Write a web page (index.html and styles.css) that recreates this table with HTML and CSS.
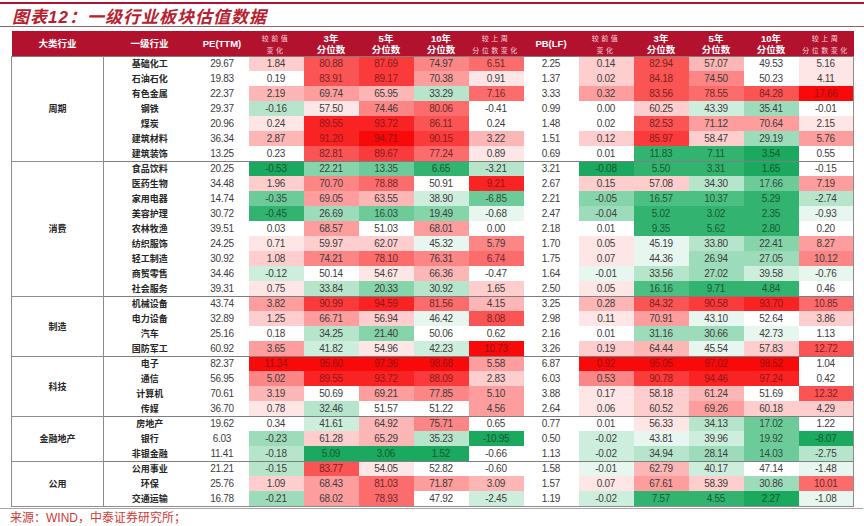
FILE: index.html
```html
<!DOCTYPE html>
<html lang="zh-CN">
<head>
<meta charset="utf-8">
<title>一级行业板块估值数据</title>
<link rel="stylesheet" href="styles.css">
</head>
<body>
<div class="page">
  <div class="topline"></div>
  <h1 class="title">图表12：一级行业板块估值数据</h1>
  <div class="rule"></div>
  <table class="val">
    <colgroup>
      <col class="c-cat"><col class="c-name"><col class="c-pe">
      <col class="c-n"><col class="c-n"><col class="c-n"><col class="c-n"><col class="c-n">
      <col class="c-n"><col class="c-n"><col class="c-n"><col class="c-n"><col class="c-n"><col class="c-n">
    </colgroup>
    <thead>
      <tr>
        <th>大类行业</th>
        <th>一级行业</th>
        <th>PE(TTM)</th>
        <th class="sm">较前值<br>变化</th>
        <th>3年<br>分位数</th>
        <th>5年<br>分位数</th>
        <th>10年<br>分位数</th>
        <th class="sm">较上周<br>分位数变化</th>
        <th>PB(LF)</th>
        <th class="sm">较前值<br>变化</th>
        <th>3年<br>分位数</th>
        <th>5年<br>分位数</th>
        <th>10年<br>分位数</th>
        <th class="sm">较上周<br>分位数变化</th>
      </tr>
    </thead>
    <tbody>
      <tr class="grp"><td class="cat" rowspan="7">周期</td><td class="name">基础化工</td><td>29.67</td><td class="r2">1.84</td><td class="r7">80.88</td><td class="r8">87.69</td><td class="r5">74.97</td><td class="r6">6.51</td><td>2.25</td><td class="r2">0.14</td><td class="r7">82.94</td><td class="r3">57.07</td><td>49.53</td><td class="r1">5.16</td></tr>
      <tr><td class="name">石油石化</td><td>19.83</td><td>0.19</td><td class="r7">83.91</td><td class="r8">89.17</td><td class="r4">70.38</td><td class="r1">0.91</td><td>1.37</td><td class="r2">0.02</td><td class="r7">84.18</td><td class="r5">74.50</td><td>50.23</td><td class="r1">4.11</td></tr>
      <tr><td class="name">有色金属</td><td>22.37</td><td class="r3">2.19</td><td class="r4">69.74</td><td class="r3">65.95</td><td class="g3">33.29</td><td class="r6">7.16</td><td>3.33</td><td class="r4">0.32</td><td class="r7">83.56</td><td class="r6">78.55</td><td class="r7">84.28</td><td class="r10">17.66</td></tr>
      <tr><td class="name">钢铁</td><td>29.37</td><td class="g3">-0.16</td><td class="r1">57.50</td><td class="r5">74.46</td><td class="r6">80.06</td><td>-0.41</td><td>0.99</td><td>0.00</td><td class="r2">60.25</td><td class="g2">43.39</td><td class="g4">35.41</td><td>-0.01</td></tr>
      <tr><td class="name">煤炭</td><td>20.96</td><td class="r1">0.24</td><td class="r9">89.55</td><td class="r9">93.72</td><td class="r7">86.11</td><td>0.24</td><td>1.48</td><td>0.02</td><td class="r7">82.53</td><td class="r4">71.12</td><td class="r4">70.64</td><td class="r1">2.15</td></tr>
      <tr><td class="name">建筑材料</td><td>36.34</td><td class="r3">2.87</td><td class="r9">91.20</td><td class="r10">94.71</td><td class="r8">90.15</td><td class="r3">3.22</td><td>1.51</td><td class="r2">0.12</td><td class="r8">85.97</td><td class="r2">58.47</td><td class="g4">29.19</td><td class="r4">5.76</td></tr>
      <tr><td class="name">建筑装饰</td><td>13.25</td><td>0.23</td><td class="r7">82.81</td><td class="r8">89.67</td><td class="r6">77.24</td><td class="r1">0.89</td><td>0.69</td><td>0.01</td><td class="g8">11.83</td><td class="g8">7.11</td><td class="g9">3.54</td><td>0.55</td></tr>

      <tr class="grp"><td class="cat" rowspan="9">消费</td><td class="name">食品饮料</td><td>20.25</td><td class="g9">-0.53</td><td class="g5">22.21</td><td class="g6">13.35</td><td class="g8">6.65</td><td class="g3">-3.21</td><td>3.21</td><td class="g9">-0.08</td><td class="g8">5.50</td><td class="g8">3.31</td><td class="g9">1.65</td><td>-0.15</td></tr>
      <tr><td class="name">医药生物</td><td>34.48</td><td class="r2">1.96</td><td class="r5">70.70</td><td class="r6">78.88</td><td>50.91</td><td class="r9">9.21</td><td>2.67</td><td class="r2">0.15</td><td class="r2">57.08</td><td class="g3">34.30</td><td class="g6">17.66</td><td class="r4">7.19</td></tr>
      <tr><td class="name">家用电器</td><td>14.74</td><td class="g6">-0.35</td><td class="r4">69.05</td><td class="r3">63.55</td><td class="g2">38.90</td><td class="g6">-6.85</td><td>2.21</td><td class="g5">-0.05</td><td class="g7">16.57</td><td class="g7">10.37</td><td class="g8">5.29</td><td class="g3">-2.74</td></tr>
      <tr><td class="name">美容护理</td><td>30.72</td><td class="g8">-0.45</td><td class="g4">26.69</td><td class="g6">16.03</td><td class="g5">19.49</td><td class="g1">-0.68</td><td>2.47</td><td class="g4">-0.04</td><td class="g8">5.02</td><td class="g8">3.02</td><td class="g8">2.35</td><td class="g1">-0.93</td></tr>
      <tr><td class="name">农林牧渔</td><td>39.51</td><td>0.03</td><td class="r4">68.57</td><td>51.03</td><td class="r4">68.01</td><td>0.00</td><td>2.18</td><td>0.01</td><td class="g8">9.35</td><td class="g8">5.62</td><td class="g8">2.80</td><td>0.20</td></tr>
      <tr><td class="name">纺织服饰</td><td>24.25</td><td class="r1">0.71</td><td class="r2">59.97</td><td class="r2">62.07</td><td class="g1">45.32</td><td class="r5">5.79</td><td>1.70</td><td class="r1">0.05</td><td class="g1">45.19</td><td class="g3">33.80</td><td class="g5">22.41</td><td class="r4">8.27</td></tr>
      <tr><td class="name">轻工制造</td><td>30.92</td><td class="r2">1.08</td><td class="r5">74.21</td><td class="r6">78.10</td><td class="r5">76.31</td><td class="r6">6.74</td><td>1.75</td><td class="r1">0.07</td><td class="g1">44.36</td><td class="g4">26.94</td><td class="g4">27.05</td><td class="r5">10.12</td></tr>
      <tr><td class="name">商贸零售</td><td>34.46</td><td class="g2">-0.12</td><td>50.14</td><td class="r1">54.67</td><td class="r3">66.36</td><td>-0.47</td><td>1.64</td><td class="g1">-0.01</td><td class="g3">33.56</td><td class="g4">27.02</td><td class="g2">39.58</td><td class="g1">-0.76</td></tr>
      <tr><td class="name">社会服务</td><td>39.31</td><td class="r1">0.75</td><td class="g3">33.84</td><td class="g5">20.33</td><td class="g3">30.92</td><td class="r2">1.65</td><td>2.50</td><td class="r1">0.05</td><td class="g7">16.16</td><td class="g8">9.71</td><td class="g8">4.84</td><td>0.46</td></tr>

      <tr class="grp"><td class="cat" rowspan="4">制造</td><td class="name">机械设备</td><td>43.74</td><td class="r4">3.82</td><td class="r8">90.99</td><td class="r9">94.59</td><td class="r6">81.56</td><td class="r3">4.15</td><td>3.25</td><td class="r3">0.28</td><td class="r7">84.32</td><td class="r8">90.58</td><td class="r9">93.70</td><td class="r6">10.85</td></tr>
      <tr><td class="name">电力设备</td><td>32.89</td><td class="r2">1.25</td><td class="r4">66.71</td><td class="r2">56.94</td><td class="g1">46.42</td><td class="r7">8.08</td><td>2.98</td><td class="r1">0.11</td><td class="r4">70.91</td><td class="g1">43.10</td><td>52.64</td><td class="r2">3.86</td></tr>
      <tr><td class="name">汽车</td><td>25.16</td><td>0.18</td><td class="g3">34.25</td><td class="g5">21.40</td><td>50.06</td><td>0.62</td><td>2.16</td><td>0.01</td><td class="g4">31.16</td><td class="g4">30.66</td><td class="g1">42.73</td><td>1.13</td></tr>
      <tr><td class="name">国防军工</td><td>60.92</td><td class="r4">3.65</td><td class="g2">41.82</td><td class="r1">54.96</td><td class="g2">42.23</td><td class="r10">10.73</td><td>3.26</td><td class="r2">0.19</td><td class="r3">64.44</td><td class="g1">45.54</td><td class="r2">57.83</td><td class="r7">12.72</td></tr>

      <tr class="grp"><td class="cat" rowspan="4">科技</td><td class="name">电子</td><td>82.37</td><td class="r10">11.34</td><td class="r10">95.60</td><td class="r10">97.36</td><td class="r10">98.68</td><td class="r4">5.58</td><td>6.87</td><td class="r10">0.92</td><td class="r10">95.05</td><td class="r10">97.02</td><td class="r10">98.52</td><td>1.04</td></tr>
      <tr><td class="name">通信</td><td>56.95</td><td class="r5">5.02</td><td class="r9">89.55</td><td class="r9">93.72</td><td class="r8">88.09</td><td class="r2">2.83</td><td>6.03</td><td class="r5">0.53</td><td class="r8">90.78</td><td class="r9">94.46</td><td class="r9">97.24</td><td>0.42</td></tr>
      <tr><td class="name">计算机</td><td>70.61</td><td class="r3">3.19</td><td>50.69</td><td class="r4">69.21</td><td class="r5">77.85</td><td class="r4">5.10</td><td>3.88</td><td class="r1">0.17</td><td class="r2">58.18</td><td class="r3">61.24</td><td>51.69</td><td class="r7">12.32</td></tr>
      <tr><td class="name">传媒</td><td>36.70</td><td class="r1">0.78</td><td class="g3">32.46</td><td>51.57</td><td>51.22</td><td class="r4">4.56</td><td>2.64</td><td class="r1">0.06</td><td class="r2">60.52</td><td class="r4">69.26</td><td class="r2">60.18</td><td class="r2">4.29</td></tr>

      <tr class="grp"><td class="cat" rowspan="3">金融地产</td><td class="name">房地产</td><td>19.62</td><td>0.34</td><td class="g2">41.61</td><td class="r3">64.92</td><td class="r5">75.71</td><td>0.65</td><td>0.77</td><td>0.01</td><td class="r1">56.33</td><td class="g3">34.13</td><td class="g6">17.02</td><td>1.22</td></tr>
      <tr><td class="name">银行</td><td>6.03</td><td class="g4">-0.23</td><td class="r2">61.28</td><td class="r3">65.29</td><td class="g3">35.23</td><td class="g9">-10.95</td><td>0.50</td><td class="g2">-0.02</td><td class="g1">43.81</td><td class="g2">39.96</td><td class="g6">19.92</td><td class="g9">-8.07</td></tr>
      <tr><td class="name">非银金融</td><td>11.41</td><td class="g3">-0.18</td><td class="g9">5.09</td><td class="g9">3.06</td><td class="g9">1.52</td><td>-0.66</td><td>1.13</td><td class="g2">-0.02</td><td class="g3">34.94</td><td class="g4">28.14</td><td class="g6">14.03</td><td class="g3">-2.75</td></tr>

      <tr class="grp"><td class="cat" rowspan="3">公用</td><td class="name">公用事业</td><td>21.21</td><td class="g3">-0.15</td><td class="r7">83.77</td><td class="r1">54.05</td><td>52.82</td><td>-0.60</td><td>1.58</td><td class="g1">-0.01</td><td class="r3">62.79</td><td class="g2">40.17</td><td>47.14</td><td class="g1">-1.48</td></tr>
      <tr><td class="name">环保</td><td>25.76</td><td class="r2">1.09</td><td class="r4">68.43</td><td class="r6">81.03</td><td class="r4">71.87</td><td class="r3">3.09</td><td>1.57</td><td class="r1">0.07</td><td class="r4">67.61</td><td class="r2">58.39</td><td class="g4">30.86</td><td class="r6">10.01</td></tr>
      <tr class="last"><td class="name">交通运输</td><td>16.78</td><td class="g4">-0.21</td><td class="r4">68.02</td><td class="r6">78.93</td><td>47.92</td><td class="g2">-2.45</td><td>1.19</td><td class="g2">-0.02</td><td class="g8">7.57</td><td class="g8">4.55</td><td class="g9">2.27</td><td class="g1">-1.08</td></tr>
    </tbody>
  </table>
  <div class="rule2"></div>
  <p class="source">来源：WIND，中泰证券研究所；</p>
</div>
</body>
</html>
```

FILE: styles.css
```css
html, body {
  margin: 0;
  padding: 0;
  background: #ffffff;
}

body {
  font-family: "Liberation Sans", "Noto Sans CJK SC", sans-serif;
  color: #3a3a3a;
}

.page {
  width: 864px;
}

.topline {
  margin-top: 2px;
  height: 2px;
  background: #b3122f;
}

.title {
  margin: 0;
  height: 22px;
  padding-left: 12px;
  font-family: "Liberation Sans", "Noto Sans CJK SC", sans-serif;
  font-size: 17px;
  line-height: 27px;
  font-weight: 700;
  font-style: italic;
  letter-spacing: 1px;
  color: #b8202e;
}

.rule {
  height: 1px;
  background: #8a6468;
}

.val {
  margin: 4px 0 0 11px;
  width: 842px;
  border-collapse: collapse;
  table-layout: fixed;
}

.c-cat { width: 92px; }
.c-name { width: 92px; }
.c-pe { width: 53px; }
.c-n { width: 55px; }

.val th {
  height: 25px;
  padding: 0;
  background: #b3122f;
  color: #ffffff;
  font-family: "Liberation Sans", "Noto Sans CJK SC", sans-serif;
  font-size: 9.5px;
  line-height: 11px;
  font-weight: 700;
  text-align: center;
  vertical-align: middle;
  white-space: nowrap;
}

.val th.sm {
  font-family: "Noto Sans CJK SC", sans-serif;
  font-size: 7px;
  font-weight: 400;
  letter-spacing: 2.5px;
  line-height: 12px;
  color: rgba(255, 255, 255, 0.82);
}

.val td {
  height: 15px;
  padding: 0;
  font-size: 10px;
  line-height: 14px;
  letter-spacing: -0.3px;
  text-align: center;
  vertical-align: middle;
  white-space: nowrap;
  color: #3d3d3d;
}

.val tr.grp td {
  height: 14px;
  border-top: 1px solid #7e7e7e;
}

.val td.name,
.val td.cat {
  font-family: "Noto Sans CJK SC", sans-serif;
  font-size: 9px;
  font-weight: 700;
  letter-spacing: 0;
  color: #262626;
}

.val td.cat {
  border-left: 1px solid #8c8c8c;
  border-right: 1px solid #8c8c8c;
  border-bottom: 1px solid #8c8c8c;
}

.val td:last-child {
  border-right: 1px solid #8c8c8c;
}

.val tr.last td {
  border-bottom: 1px solid #8c8c8c;
}

/* heat scale: red */
.val td.r1 { background: #fee6e6; }
.val td.r2 { background: #fecece; }
.val td.r3 { background: #fdb6b6; }
.val td.r4 { background: #fd9d9d; }
.val td.r5 { background: #fc8585; }
.val td.r6 { background: #fc6c6c; color: #6e2a2a; }
.val td.r7 { background: #fb5454; color: #7a2222; }
.val td.r8 { background: #fb3b3b; color: #8a1a1a; }
.val td.r9 { background: #fa2323; color: #921616; }
.val td.r10 { background: #f80a0a; color: #941212; }

/* heat scale: green */
.val td.g1 { background: #e7f6ee; }
.val td.g2 { background: #ceeedd; }
.val td.g3 { background: #b6e5cc; }
.val td.g4 { background: #9ddcbb; }
.val td.g5 { background: #85d4aa; }
.val td.g6 { background: #6ccb99; color: #2c4f3a; }
.val td.g7 { background: #4cbf82; color: #1f5535; }
.val td.g8 { background: #32b470; color: #175a32; }
.val td.g9 { background: #1aa95e; color: #115a2e; }

.rule2 {
  margin-top: 1px;
  width: 863px;
  height: 1px;
  background: #a6a6a6;
}

.source {
  margin: 2px 0 0 0;
  padding-left: 10px;
  font-family: "Liberation Sans", "Noto Sans CJK SC", sans-serif;
  font-size: 12px;
  line-height: 15px;
  font-weight: 400;
  color: #d23a36;
}
```
